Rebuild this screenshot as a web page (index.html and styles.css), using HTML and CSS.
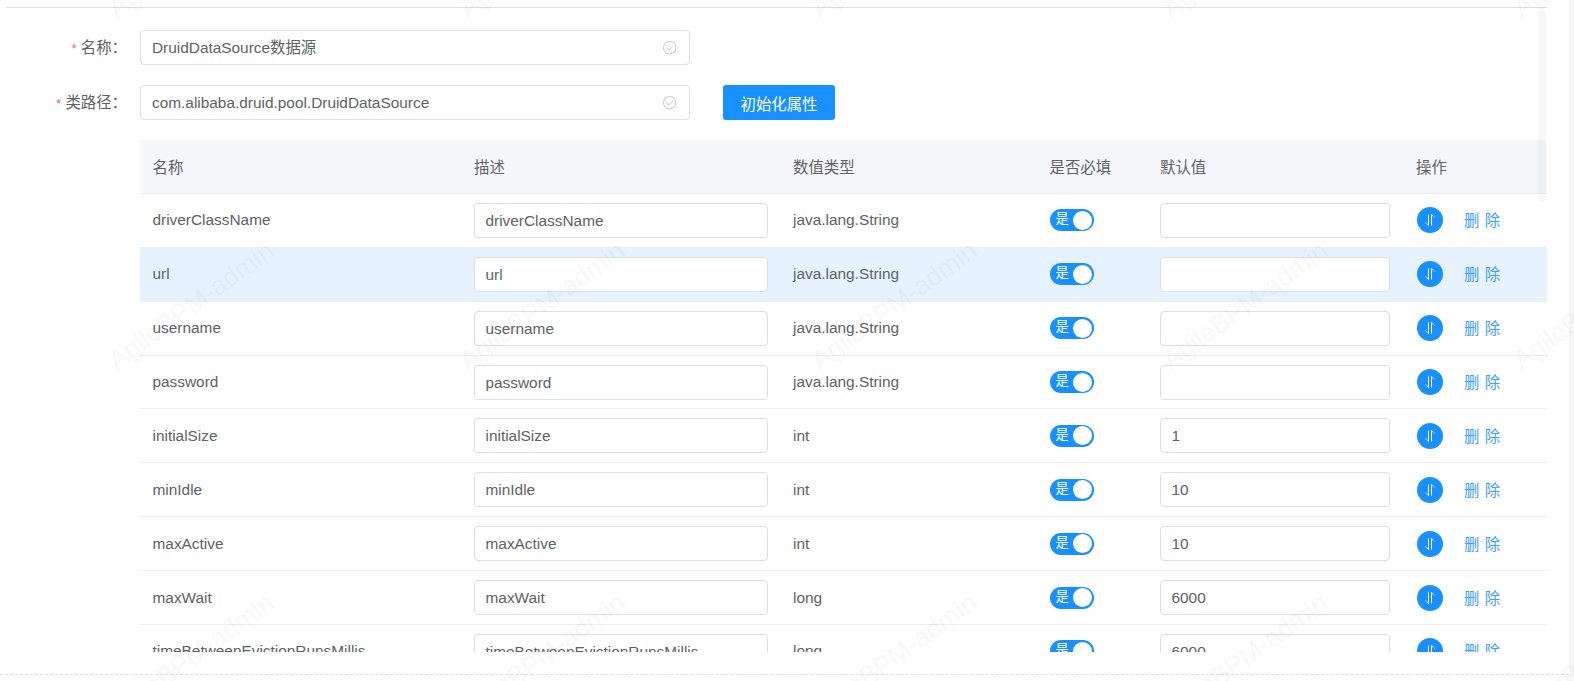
FILE: index.html
```html
<!DOCTYPE html>
<html lang="zh-CN">
<head>
<meta charset="utf-8">
<title>DruidDataSource</title>
<link rel="stylesheet" href="styles.css">
</head>
<body>
<div class="page">
  <main class="main">
    <div class="panel">
      <form class="form">
        <div class="form-row">
          <div class="form-label"><i class="req">*</i> 名称：</div>
          <div class="field field-wide"><span>DruidDataSource数据源</span>
            <svg class="check" viewBox="0 0 16 16"><circle cx="8" cy="8" r="6.5"/><path d="M5 8.2l2.2 2.1L11 6.4"/></svg>
          </div>
        </div>
        <div class="form-row">
          <div class="form-label"><i class="req">*</i> 类路径：</div>
          <div class="field field-wide"><span>com.alibaba.druid.pool.DruidDataSource</span>
            <svg class="check" viewBox="0 0 16 16"><circle cx="8" cy="8" r="6.5"/><path d="M5 8.2l2.2 2.1L11 6.4"/></svg>
          </div>
          <button type="button" class="primary">初始化属性</button>
        </div>
        <div class="table-clip">
          <div class="grid grid-head">
            <div class="cell">名称</div><div class="cell">描述</div><div class="cell">数值类型</div><div class="cell">是否必填</div><div class="cell">默认值</div><div class="cell">操作</div>
          </div>

          <div class="grid"><div class="cell">driverClassName</div><div class="cell"><div class="field">driverClassName</div></div><div class="cell">java.lang.String</div><div class="cell"><span class="switch">是<b></b></span></div><div class="cell"><div class="field"></div></div><div class="cell"><span class="round"><svg viewBox="0 0 26 26"><path d="M11.5 7.5v11l-3-3M14.5 18.5v-11l3 3"/></svg></span><a class="del">删 除</a></div></div>

          <div class="grid grid-hover"><div class="cell">url</div><div class="cell"><div class="field">url</div></div><div class="cell">java.lang.String</div><div class="cell"><span class="switch">是<b></b></span></div><div class="cell"><div class="field"></div></div><div class="cell"><span class="round"><svg viewBox="0 0 26 26"><path d="M11.5 7.5v11l-3-3M14.5 18.5v-11l3 3"/></svg></span><a class="del">删 除</a></div></div>

          <div class="grid"><div class="cell">username</div><div class="cell"><div class="field">username</div></div><div class="cell">java.lang.String</div><div class="cell"><span class="switch">是<b></b></span></div><div class="cell"><div class="field"></div></div><div class="cell"><span class="round"><svg viewBox="0 0 26 26"><path d="M11.5 7.5v11l-3-3M14.5 18.5v-11l3 3"/></svg></span><a class="del">删 除</a></div></div>

          <div class="grid"><div class="cell">password</div><div class="cell"><div class="field">password</div></div><div class="cell">java.lang.String</div><div class="cell"><span class="switch">是<b></b></span></div><div class="cell"><div class="field"></div></div><div class="cell"><span class="round"><svg viewBox="0 0 26 26"><path d="M11.5 7.5v11l-3-3M14.5 18.5v-11l3 3"/></svg></span><a class="del">删 除</a></div></div>

          <div class="grid"><div class="cell">initialSize</div><div class="cell"><div class="field">initialSize</div></div><div class="cell">int</div><div class="cell"><span class="switch">是<b></b></span></div><div class="cell"><div class="field">1</div></div><div class="cell"><span class="round"><svg viewBox="0 0 26 26"><path d="M11.5 7.5v11l-3-3M14.5 18.5v-11l3 3"/></svg></span><a class="del">删 除</a></div></div>

          <div class="grid"><div class="cell">minIdle</div><div class="cell"><div class="field">minIdle</div></div><div class="cell">int</div><div class="cell"><span class="switch">是<b></b></span></div><div class="cell"><div class="field">10</div></div><div class="cell"><span class="round"><svg viewBox="0 0 26 26"><path d="M11.5 7.5v11l-3-3M14.5 18.5v-11l3 3"/></svg></span><a class="del">删 除</a></div></div>

          <div class="grid"><div class="cell">maxActive</div><div class="cell"><div class="field">maxActive</div></div><div class="cell">int</div><div class="cell"><span class="switch">是<b></b></span></div><div class="cell"><div class="field">10</div></div><div class="cell"><span class="round"><svg viewBox="0 0 26 26"><path d="M11.5 7.5v11l-3-3M14.5 18.5v-11l3 3"/></svg></span><a class="del">删 除</a></div></div>

          <div class="grid"><div class="cell">maxWait</div><div class="cell"><div class="field">maxWait</div></div><div class="cell">long</div><div class="cell"><span class="switch">是<b></b></span></div><div class="cell"><div class="field">6000</div></div><div class="cell"><span class="round"><svg viewBox="0 0 26 26"><path d="M11.5 7.5v11l-3-3M14.5 18.5v-11l3 3"/></svg></span><a class="del">删 除</a></div></div>

          <div class="grid"><div class="cell">timeBetweenEvictionRunsMillis</div><div class="cell"><div class="field">timeBetweenEvictionRunsMillis</div></div><div class="cell">long</div><div class="cell"><span class="switch">是<b></b></span></div><div class="cell"><div class="field">6000</div></div><div class="cell"><span class="round"><svg viewBox="0 0 26 26"><path d="M11.5 7.5v11l-3-3M14.5 18.5v-11l3 3"/></svg></span><a class="del">删 除</a></div></div>
        </div>
      </form>
    </div>
    <div class="footer-rule"></div>
  </main>
  <div class="page-scroll"></div>
</div>
<div class="thumb"></div>
<div class="watermark" aria-hidden="true">
  <span>AgileBPM-admin</span><span>AgileBPM-admin</span><span>AgileBPM-admin</span><span>AgileBPM-admin</span><span>AgileBPM-admin</span>
  <span>AgileBPM-admin</span><span>AgileBPM-admin</span><span>AgileBPM-admin</span><span>AgileBPM-admin</span><span>AgileBPM-admin</span>
  <span>AgileBPM-admin</span><span>AgileBPM-admin</span><span>AgileBPM-admin</span><span>AgileBPM-admin</span><span>AgileBPM-admin</span>
</div>
</body>
</html>
```
FILE: styles.css
```css
* { box-sizing: border-box; }
html, body { margin: 0; height: 681px; overflow: hidden; background: #fff; }
body {
  position: relative;
  font-family: "Liberation Sans", "Noto Sans CJK SC", sans-serif;
  font-size: 15.4px;
  color: #606266;
}
.page { display: flex; height: 681px; }
.main { flex: 1; min-width: 0; }
.page-scroll { width: 5px; background: #f6f6f6; }

.panel {
  height: 674px;
  padding: 7px 22px 0 6px;
}
.form {
  height: 645px;
  border-top: 1px solid #dcdfe6;
  padding-top: 22px;
  overflow: hidden;
}
.footer-rule { border-top: 1px dashed #dcdfe6; }

.form-row {
  display: flex;
  align-items: center;
  height: 35px;
  margin-bottom: 20px;
}
.form-label {
  width: 134px;
  padding-right: 13px;
  text-align: right;
  white-space: nowrap;
  line-height: 33px;
}
.req { color: #f56c6c; font-style: normal; font-size: 13px; }

.field {
  position: relative;
  height: 35px;
  padding: 0 11px;
  line-height: 33px;
  background: #fff;
  border: 1px solid #dcdfe6;
  border-radius: 4px;
  white-space: nowrap;
  overflow: hidden;
}
.field-wide { width: 550px; }
.check {
  position: absolute;
  right: 12px;
  top: 9px;
  width: 15.4px;
  height: 15.4px;
  fill: none;
  stroke: #c0c4cc;
  stroke-width: 1;
}
.primary {
  margin-left: 33px;
  width: 112px;
  height: 35px;
  border: 0;
  border-radius: 3px;
  background: #1890ff;
  color: #fff;
  font: inherit;
}

.grid {
  display: grid;
  grid-template-columns: 321.5px 319px 257px 110px 256px 141px;
  height: 53.9px;
  align-items: center;
  border-bottom: 1px solid #ebeef5;
}
.grid-head { background: #f5f7fa; }
.grid-hover { background: #e6f3ff; }
.cell { padding: 0 12.5px; white-space: nowrap; display: flex; align-items: center; }
.cell > .field { width: 100%; }
.cell:nth-child(2) > .field { width: 294px; flex: none; margin-left: -.5px; }
.cell:nth-child(5) > .field { width: 230px; flex: none; margin-left: -.5px; }
.table-clip { margin-left: 134px; }

.switch {
  position: relative;
  display: inline-block;
  flex: none;
  width: 44px;
  height: 22px;
  line-height: 20px;
  padding-left: 6px;
  border-radius: 11px;
  background: #1890ff;
  color: #fff;
  font-size: 13.2px;
}
.cell:nth-child(4) { padding-left: 12px; }
.switch b {
  position: absolute;
  right: 2px;
  top: 1.5px;
  width: 19px;
  height: 19px;
  border-radius: 50%;
  background: #fff;
}
.round {
  display: inline-flex;
  width: 26px;
  height: 26px;
  margin-left: 1px;
  border-radius: 50%;
  background: #1890ff;
}
.round svg { width: 26px; height: 26px; fill: none; stroke: #fff; stroke-width: 1; }
.del { margin-left: 21px; color: #409eff; word-spacing: 1px; position: relative; top: -1px; }

.thumb {
  position: absolute;
  left: 1538px;
  top: 10px;
  width: 8px;
  height: 192px;
  border-radius: 4px;
  background: rgba(0, 0, 0, .03);
}
.watermark {
  position: absolute;
  left: 0;
  top: -223px;
  width: 1574px;
  height: 904px;
  overflow: hidden;
  pointer-events: none;
  display: grid;
  grid-template-columns: repeat(5, 351.3px);
  grid-auto-rows: 352px;
  padding-left: 93px;
}
.watermark span {
  align-self: center;
  justify-self: start;
  font-size: 26.4px;
  white-space: nowrap;
  color: rgba(0, 0, 0, .05);
  transform: rotate(-36deg);
}
```
